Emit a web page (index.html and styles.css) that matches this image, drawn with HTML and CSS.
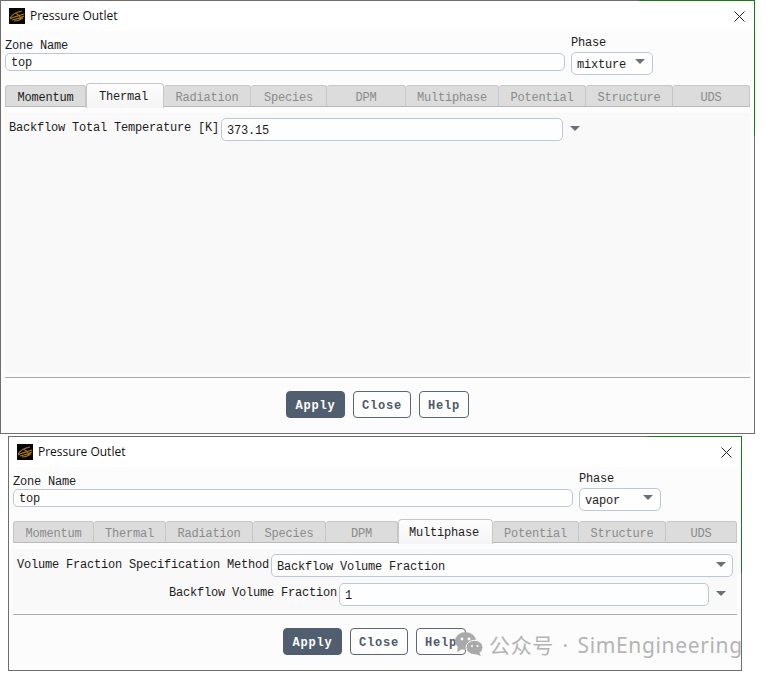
FILE: index.html
```html
<!DOCTYPE html>
<html lang="en">
<head>
<meta charset="utf-8">
<title>Pressure Outlet</title>
<link rel="stylesheet" href="styles.css">
</head>
<body>
<section class="window window-a">
  <header class="titlebar">
    <svg class="logo" viewBox="0 0 16 16"><rect width="16" height="16" fill="#050505"/><path d="M1 10 C3 7 7 4 13 3 M1 11 C4 9 9 8 15 6 M3 12 C6 11 10 11 15 8 M5 13 C8 13 11 12 14 10 M6 5 C9 6 11 8 12 11" fill="none" stroke="#a9781c" stroke-width="1.1"/></svg>
    <span class="title">Pressure Outlet</span>
    <svg class="close" viewBox="0 0 11 11"><path d="M.5 .5 L10.5 10.5 M10.5 .5 L.5 10.5" stroke="#222" stroke-width="1" fill="none"/></svg>
  </header>
  <div class="body">
    <div class="top-row">
      <div class="zone"><div class="label">Zone Name</div><div class="input input-zone">top</div></div>
      <div class="phase"><div class="label">Phase</div><div class="input select-phase"><span>mixture</span><i class="arrow"></i></div></div>
    </div>
    <nav class="tabs tabs-a">
      <div class="tab enabled">Momentum</div><div class="tab active">Thermal</div><div class="tab">Radiation</div><div class="tab">Species</div><div class="tab">DPM</div><div class="tab">Multiphase</div><div class="tab">Potential</div><div class="tab">Structure</div><div class="tab">UDS</div>
    </nav>
    <div class="panel">
      <div class="field">
        <span class="label field-label">Backflow Total Temperature [K]</span>
        <div class="input input-temp">373.15</div>
        <span class="arrow-box"><i class="arrow"></i></span>
      </div>
    </div>
    <div class="sep"></div>
    <div class="buttons"><button class="btn primary btn-apply">Apply</button><button class="btn btn-close">Close</button><button class="btn btn-help">Help</button></div>
  </div>
</section>

<section class="window window-b">
  <header class="titlebar">
    <svg class="logo" viewBox="0 0 16 16"><rect width="16" height="16" fill="#050505"/><path d="M1 10 C3 7 7 4 13 3 M1 11 C4 9 9 8 15 6 M3 12 C6 11 10 11 15 8 M5 13 C8 13 11 12 14 10 M6 5 C9 6 11 8 12 11" fill="none" stroke="#a9781c" stroke-width="1.1"/></svg>
    <span class="title">Pressure Outlet</span>
    <svg class="close" viewBox="0 0 11 11"><path d="M.5 .5 L10.5 10.5 M10.5 .5 L.5 10.5" stroke="#222" stroke-width="1" fill="none"/></svg>
  </header>
  <div class="body">
    <div class="top-row">
      <div class="zone"><div class="label">Zone Name</div><div class="input input-zone">top</div></div>
      <div class="phase"><div class="label">Phase</div><div class="input select-phase"><span>vapor</span><i class="arrow"></i></div></div>
    </div>
    <nav class="tabs tabs-b">
      <div class="tab">Momentum</div><div class="tab">Thermal</div><div class="tab">Radiation</div><div class="tab">Species</div><div class="tab">DPM</div><div class="tab active">Multiphase</div><div class="tab">Potential</div><div class="tab">Structure</div><div class="tab">UDS</div>
    </nav>
    <div class="panel">
      <div class="field">
        <span class="label field-label method-label">Volume Fraction Specification Method</span>
        <div class="input select-method"><span>Backflow Volume Fraction</span><i class="arrow"></i></div>
      </div>
      <div class="field field-right">
        <span class="label field-label">Backflow Volume Fraction</span>
        <div class="input input-fraction">1</div>
        <span class="arrow-box"><i class="arrow"></i></span>
      </div>
    </div>
    <div class="sep"></div>
    <div class="buttons"><button class="btn primary btn-apply">Apply</button><button class="btn btn-close">Close</button><button class="btn btn-help">Help</button></div>
  </div>
  <div class="watermark">
    <svg class="wechat" viewBox="0 0 28 24"><ellipse cx="10.5" cy="9" rx="10.5" ry="9" fill="#a9a9a9"/><path d="M3 14 L2 20 L9 16Z" fill="#a9a9a9"/><ellipse cx="19.5" cy="15.5" rx="8.5" ry="7.2" fill="#a9a9a9" stroke="#fcfcfc"/><path d="M24 20 L26 24 L20 22Z" fill="#a9a9a9"/><circle cx="7" cy="7" r="1.4" fill="#fcfcfc"/><circle cx="14" cy="7" r="1.4" fill="#fcfcfc"/><circle cx="17" cy="14" r="1.1" fill="#fcfcfc"/><circle cx="22.5" cy="14" r="1.1" fill="#fcfcfc"/></svg>
    <span class="wm-text">公众号 · SimEngineering</span>
  </div>
</section>
</body>
</html>
```

FILE: styles.css
```css
* { box-sizing: border-box; }
html, body { margin: 0; padding: 0; background: #fff; }
body { position: relative; width: 766px; height: 676px; overflow: hidden; font-family: "Liberation Mono", "DejaVu Sans Mono", monospace; font-size: 12px; letter-spacing: -.2px; color: #1c1c1c; }

.window { position: absolute; display: flex; flex-direction: column; background: #fff; border: 1px solid #6e6e6e; }
.window::after { content: ""; position: absolute; top: -1px; right: -1px; border-top: 1px solid #1a7a1a; border-right: 1px solid #1a7a1a; pointer-events: none; }
.window-a { left: 0; top: 0; width: 755px; height: 434px; }
.window-a::after { width: 115px; height: 135px; }
.window-b { left: 8px; top: 436px; width: 734px; height: 235px; }
.window-b::after { width: 94px; height: 136px; }

.titlebar { flex: none; height: 30px; display: flex; align-items: center; padding: 0 9px 0 8px; }
.logo { width: 16px; height: 16px; flex: none; }
.title { margin-left: 5px; margin-top: -2px; flex: 1; font-family: "Open Sans", "Noto Sans", sans-serif; font-size: 12px; letter-spacing: 0; color: #111; }
.close { width: 11px; height: 11px; flex: none; }

.body { flex: 1; display: flex; flex-direction: column; min-height: 0; padding: 4px 4px 15px; background: #fcfcfc; }

.label { line-height: 16px; margin-bottom: -2px; white-space: nowrap; }
.input { border: 1px solid #bcc7d8; border-radius: 5px; background: #fefefe; padding: 2px 5px 0; white-space: nowrap; display: flex; align-items: center; justify-content: space-between; }

.top-row { display: flex; gap: 6px; }
.zone { flex: none; width: 560px; padding-top: 3px; }
.input-zone { height: 18px; margin-top: 1px; }
.phase { flex: none; width: 82px; }
.select-phase { height: 23px; margin-top: 3px; padding-right: 7px; }
.select-phase .arrow { margin-bottom: 6px; }

.arrow { display: block; width: 0; height: 0; border-left: 5.5px solid transparent; border-right: 5.5px solid transparent; border-top: 5px solid #6b6f76; margin-bottom: 4px; }
.arrow-box { display: flex; justify-content: center; align-items: center; }
.arrow-box .arrow { margin-bottom: 2px; }

.tabs { display: grid; height: 22px; margin-top: 10px; }
.tabs-a { grid-template-columns: 81px 78px 87px 76px 79px 93px 87px 87px 77px; }
.tabs-b { grid-template-columns: 81px 72px 87px 73px 72px 95px 86px 87px 71px; }
.tab { display: flex; align-items: center; justify-content: center; background: #dcdcdc; border: 1px solid #c6c6c6; border-left-width: 0; border-bottom-color: #b9b9b9; border-radius: 3px 3px 0 0; color: #8b8b8b; padding-top: 3px; }
.tab:first-child { border-left-width: 1px; }
.tab.enabled { color: #1c1c1c; }
.tab.active { position: relative; margin: -2px 0 -1px; background: linear-gradient(#fdfdfd, #f4f4f4); border-bottom: 0; border-left-width: 1px; color: #1c1c1c; padding-top: 3px; padding-bottom: 1px; padding-right: 3px; border-radius: 4px 4px 0 0; }

.panel { flex: 1; margin-top: 6px; padding: 5px 4px 4px; background: #f9f9f9; display: flex; flex-direction: column; gap: 6px; }
.field { display: flex; align-items: center; }
.field-label { padding-bottom: 5px; }
.input-temp { width: 342px; height: 23px; margin-left: 2px; }
.window-a .arrow-box { width: 24px; }
.method-label { width: 254px; padding-bottom: 3px; }
.select-method { flex: 1; height: 23px; padding-right: 6px; }
.field-right { justify-content: flex-end; }
.input-fraction { width: 370px; height: 23px; margin-left: 2px; }
.field-right .arrow-box { width: 24px; }

.sep { flex: none; height: 1px; margin-top: 4px; background: #a9a9a9; }

.buttons { flex: none; display: flex; justify-content: center; gap: 8px; margin-top: 13px; }
.window-b .buttons { padding-right: 1px; }
.btn { height: 27px; padding: 2px 0 0; border: 1px solid #5b6777; border-radius: 4px; background: #fdfdfd; color: #4e5a6a; font-family: "Liberation Mono", monospace; font-size: 12px; font-weight: 700; letter-spacing: .8px; }
.btn.primary { background: #515e6f; color: #fff; border-color: #515e6f; }
.btn-apply { width: 59px; }
.btn-close { width: 58px; }
.btn-help { width: 50px; }

.watermark { position: absolute; left: 446px; top: 192px; width: 287px; height: 30px; display: flex; align-items: center; overflow: hidden; white-space: nowrap; }
.wechat { width: 28px; height: 24px; flex: none; }
.wm-text { margin-left: 6px; font-family: "Noto Sans", "Noto Sans CJK SC", sans-serif; font-size: 21px; letter-spacing: .65px; word-spacing: 2.5px; color: #b4b4b4; }
```
